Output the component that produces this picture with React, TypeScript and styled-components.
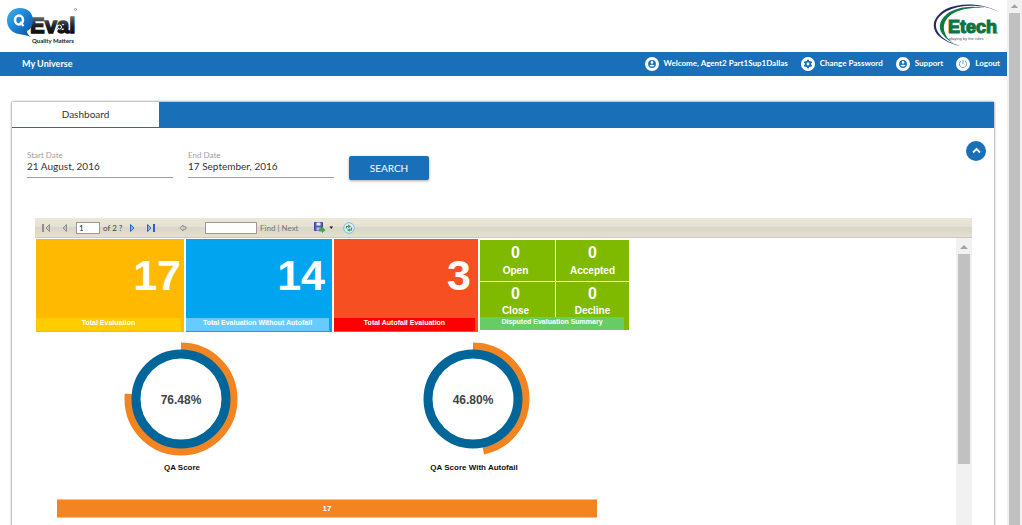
import React from "react";
import styled, { createGlobalStyle } from "styled-components";

const BLUE = "#1a6fb9";

const GlobalStyle = createGlobalStyle`
  *, *::before, *::after { box-sizing: border-box; }
  body { margin: 0; background: #fff; font-family: Lato, "Open Sans", sans-serif; color: #333; }
  button, input { font-family: inherit; margin: 0; }
`;

const Page = styled.div`
  display: flex;
  height: 100vh;
  overflow: hidden;
`;

const Main = styled.div`
  flex: 1;
  min-width: 0;
  display: flex;
  flex-direction: column;
`;

const ScrollTrack = styled.div<{ $width: number }>`
  flex: none;
  width: ${(p) => p.$width}px;
  padding: 0 2px;
  background: #f1f1f1;
`;

const ScrollArrow = styled.svg<{ $height: number }>`
  display: block;
  width: 100%;
  height: ${(p) => p.$height}px;
`;

const ScrollThumb = styled.div<{ $height: string }>`
  height: ${(p) => p.$height};
  background: #c1c1c1;
`;

const Header = styled.header`
  flex: none;
  display: flex;
  justify-content: space-between;
  height: 52px;
  padding: 0 6px;
`;

const Nav = styled.nav`
  flex: none;
  display: flex;
  justify-content: space-between;
  align-items: center;
  height: 24px;
  padding: 0 7px 0 22px;
  background: ${BLUE};
`;

const NavTitle = styled.a`
  color: #fff;
  font-size: 9px;
  line-height: 12px;
  font-weight: 700;
  text-decoration: none;
`;

const UserLinks = styled.div`
  display: flex;
  gap: 13px;
`;

const UserLink = styled.a`
  display: flex;
  gap: 5px;
  color: #fff;
  font-size: 8px;
  line-height: 12px;
  font-weight: 700;
  text-decoration: none;
  white-space: nowrap;
`;

const Panel = styled.section`
  flex: 1;
  min-height: 0;
  display: flex;
  flex-direction: column;
  margin: 26px 13px 0 12px;
  box-shadow: 0 0 2px 1px rgba(0, 0, 0, 0.3);
  border-radius: 2px 2px 0 0;
`;

const TabBar = styled.div`
  flex: none;
  display: flex;
  height: 26px;
  padding-bottom: 1px;
  background: ${BLUE};
`;

const Tab = styled.button`
  width: 147px;
  padding: 0 0 2px;
  border: 0;
  background: #fff;
  color: #333;
  font-size: 10px;
  line-height: 22px;
`;

const Filters = styled.form`
  flex: none;
  display: flex;
  align-items: flex-start;
  gap: 15px;
  height: 90px;
  padding: 22px 8px 0 15px;
`;

const Field = styled.div`
  display: flex;
  flex-direction: column;
  width: 146px;
`;

const FieldLabel = styled.label`
  font-size: 8px;
  line-height: 10px;
  color: #9e9e9e;
`;

const FieldInput = styled.input`
  width: 100%;
  height: 18px;
  padding: 0 0 6px;
  border: 0;
  border-bottom: 1px solid #9e9e9e;
  background: transparent;
  font-size: 10px;
  line-height: 11px;
  color: #333;
`;

const SearchButton = styled.button`
  width: 80px;
  height: 24px;
  margin-top: 6px;
  padding: 0;
  border: 0;
  border-radius: 2px;
  background: ${BLUE};
  color: #fff;
  font-size: 10px;
  line-height: 24px;
  box-shadow: 0 1px 3px rgba(0, 0, 0, 0.35);
`;

const CollapseButton = styled.button`
  flex: none;
  display: flex;
  width: 20px;
  height: 20px;
  margin: -9px 0 0 auto;
  padding: 0;
  border: 0;
  border-radius: 50%;
  background: ${BLUE};
`;

const Report = styled.div`
  flex: 1;
  min-height: 0;
  display: flex;
  flex-direction: column;
  margin: 0 22px 0 23px;
`;

const Toolbar = styled.div`
  flex: none;
  display: flex;
  align-items: center;
  height: 20px;
  padding: 0 6px;
  border-bottom: 1px solid #c9c8c2;
  background: linear-gradient(#ebe8da 0, #e4e1d3 45%, #d9d6c7 50%, #e3e0d2 100%);
  font-size: 8px;
  line-height: 12px;
  color: #444;
`;

const ToolButton = styled.button<{ $gap?: number }>`
  display: flex;
  flex: none;
  padding: 0;
  border: 0;
  background: transparent;
  margin-right: ${(p) => p.$gap ?? 0}px;
`;

const ToolInput = styled.input<{ $width: number }>`
  width: ${(p) => p.$width}px;
  height: 12px;
  padding: 0 2px;
  border: 1px solid #999;
  background: #fff;
  font-size: 8px;
  line-height: 10px;
  color: #222;
`;

const PageCount = styled.span`
  width: 24px;
  margin-left: 3px;
  white-space: nowrap;
`;

const FindLinks = styled.span`
  width: 54px;
  margin-left: 3px;
  color: #777;
  white-space: nowrap;
`;

const FindLink = styled.a`
  color: inherit;
  text-decoration: none;
`;

const ReportView = styled.div`
  flex: 1;
  min-height: 0;
  display: flex;
`;

const ReportBody = styled.div`
  flex: 1;
  min-width: 0;
  overflow: hidden;
  padding: 1px 0 0 1px;
  font-family: "Liberation Sans", Arial, sans-serif;
  font-weight: 700;
`;

const Tiles = styled.div`
  display: grid;
  grid-template-columns: 148px 146px 144px 149px;
  gap: 2px;
  height: 93px;
`;

const Tile = styled.article<{ $color: string }>`
  display: flex;
  flex-direction: column;
  padding: 0 3px 1px 0;
  background: ${(p) => p.$color};
  color: #fff;
`;

const TileValue = styled.div<{ $inset: number }>`
  flex: 1;
  padding: 11px ${(p) => p.$inset}px 0 0;
  text-align: right;
  font-size: 43px;
  line-height: 50px;
`;

const TileCaption = styled.div<{ $color: string }>`
  height: 13px;
  background: ${(p) => p.$color};
  color: #fff;
  font-size: 7px;
  line-height: 10px;
  text-align: center;
  white-space: nowrap;
`;

const SummaryTile = styled.article`
  display: flex;
  flex-direction: column;
  height: 90px;
  margin-top: 1px;
  padding-right: 5px;
  background: #80ba00;
`;

const SummaryGrid = styled.div`
  flex: 1;
  display: grid;
  grid-template-columns: 75px 74px;
  grid-template-rows: 42px 35px;
`;

const SummaryCell = styled.div<{ $right?: boolean; $bottom?: boolean }>`
  padding: ${(p) => (p.$bottom ? "2px" : "3px")} ${(p) => (p.$right ? "0" : "4px")} 0 0;
  border-left: ${(p) => (p.$right ? "1px solid #fff" : "0")};
  border-bottom: ${(p) => (p.$bottom ? "0" : "1px solid #fff")};
  color: #fff;
  text-align: center;
  font-size: 10px;
  line-height: ${(p) => (p.$bottom ? "15px" : "18px")};
`;

const SummaryValue = styled.div`
  font-size: 16px;
  line-height: 19px;
`;

const Gauges = styled.div`
  display: flex;
  padding-top: 10px;
`;

const Gauge = styled.figure`
  display: flex;
  flex-direction: column;
  align-items: center;
  width: 292px;
  margin: 0;
`;

const GaugeCaption = styled.figcaption`
  margin-top: 3px;
  color: #111;
  font-size: 8px;
  line-height: 12px;
`;

const Bar = styled.div`
  width: 540px;
  height: 19px;
  margin: 25px 0 0 21px;
  border: solid #f8bd8a;
  border-width: 1px 0;
  background: #f28522;
  color: #fff;
  text-align: center;
  font-size: 8px;
  line-height: 17px;
`;

function QEvalLogo() {
  return (
    <svg width="74" height="50" viewBox="6 0 74 50" role="img" aria-label="QEval Quality Matters">
      <defs>
        <linearGradient id="bubble" x1="0" y1="0" x2="1" y2="1">
          <stop offset="0" stopColor="#3cb4f0" />
          <stop offset="0.5" stopColor="#1b7fd0" />
          <stop offset="1" stopColor="#0a4c9c" />
        </linearGradient>
        <linearGradient id="ink" x1="0" y1="0" x2="0" y2="1">
          <stop offset="0" stopColor="#888" />
          <stop offset="0.5" stopColor="#222" />
          <stop offset="1" stopColor="#000" />
        </linearGradient>
      </defs>
      <text x="30" y="33" fontFamily="Liberation Sans, Arial, sans-serif" fontWeight="700" fontSize="22" fill="url(#ink)" stroke="url(#ink)" strokeWidth="1.400">Eval</text>
      <path d="M20 8c-8 0-13 5.500-13 12.500S12 33 19 34c3 .5 7 1 12 3-3-2-4-4-4-6 4-2 6-6 6-10.500C33 13 28 8 20 8z" fill="url(#bubble)" />
      <ellipse cx="19" cy="20" rx="4" ry="4.500" fill="none" stroke="#fff" strokeWidth="2.500" />
      <path d="M20 22l3.500 4" stroke="#fff" strokeWidth="2" />
      <circle cx="59.500" cy="27" r="2" fill="#222" stroke="#fff" />
      <path d="M58 29l-3 3" stroke="#fff" strokeWidth="1.300" />
      <circle cx="75.500" cy="9.500" r="1" fill="none" stroke="#777" strokeWidth="0.700" />
      <text x="32" y="43" fontFamily="Lato, sans-serif" fontWeight="700" fontSize="6" fill="#222">Quality Matters</text>
    </svg>
  );
}

function EtechLogo() {
  return (
    <svg width="70" height="50" viewBox="931 0 70 50" role="img" aria-label="Etech, playing by the rules">
      <path d="M999 12C984 3 960 2 946 9c-14 8-16 20-6 28 5 4 11 7 20 9-9-3-15-6-19-10-8-8-7-18 6-25 14-7 36-7 52 1z" fill="#262a66" />
      <path d="M985 8c-16-3-30 0-38 6-9 7-9 16-3 22 2 3 6 5 10 7-5-3-8-6-9-10-3-7 0-14 7-19 8-5 20-7 33-6z" fill="#0d7a42" />
      <text x="948" y="33" fontFamily="Liberation Sans, Arial, sans-serif" fontWeight="700" fontSize="18" fill="#0f7441" stroke="#0f7441" strokeWidth="1.200">Etech</text>
      <circle cx="997" cy="33" r="0.700" fill="#0f7441" />
      <text x="949" y="40" fontFamily="Liberation Sans, Arial, sans-serif" fontSize="4" fill="#4a4d80">playing by the rules</text>
    </svg>
  );
}

function Disc({ children }: { children: React.ReactNode }) {
  return (
    <svg width="14" height="14" viewBox="0 0 14 14" aria-hidden="true">
      <circle cx="7" cy="7" r="7" fill="#fff" />
      {children}
    </svg>
  );
}

function PersonIcon() {
  return (
    <Disc>
      <circle cx="7" cy="7" r="3.900" fill={BLUE} />
      <circle cx="7" cy="5.400" r="1.300" fill="#fff" />
      <path d="M4.400 8.400c.6-1 4.600-1 5.200 0-.8 1.500-4.400 1.500-5.200 0z" fill="#fff" />
    </Disc>
  );
}

function GearIcon() {
  return (
    <Disc>
      <g stroke={BLUE} strokeWidth="2">
        <path d="M7 2.800v8.400M3.300 4.900l7.400 4.200M3.300 9.100l7.400-4.200" />
      </g>
      <circle cx="7" cy="7" r="3.200" fill={BLUE} />
      <circle cx="7" cy="7" r="1.400" fill="#fff" />
    </Disc>
  );
}

function PowerIcon() {
  return (
    <Disc>
      <path d="M5 4a3.600 3.600 0 1 0 4 0M7 3v4" fill="none" stroke="#5f9bd0" strokeWidth="0.900" />
    </Disc>
  );
}

function PageIcon({ flip, end, active }: { flip?: boolean; end?: boolean; active?: boolean }) {
  const stroke = active ? "#2c62c9" : "#8f8f8f";
  const fill = active ? "#7fb2f5" : "#c4c4c4";
  return (
    <svg width="10" height="10" viewBox="0 0 10 10" aria-hidden="true">
      <g transform={flip ? "translate(10 0) scale(-1 1)" : undefined}>
        <path d={end ? "M1.500 1.500v7l3.500-3.500z" : "M3.500 1.500v7l3.500-3.500z"} fill={fill} stroke={stroke} />
        {end && <path d="M8 1v8" stroke={stroke} strokeWidth="2" />}
      </g>
    </svg>
  );
}

function BackIcon() {
  return (
    <svg width="8" height="10" viewBox="0 0 8 10" aria-hidden="true">
      <path d="M.8 5L4 2v1.800h3v2.400H4V8z" fill="#d5d5d5" stroke="#888" strokeWidth="0.900" />
    </svg>
  );
}

function ExportIcon() {
  return (
    <svg width="20" height="12" viewBox="0 0 20 12" aria-hidden="true">
      <path d="M.5.500h8v8h-8z" fill="#5560b5" stroke="#3b4596" />
      <path d="M2.500.500h4v3h-4z" fill="#e8eafa" />
      <path d="M2.500 5.500h4v3h-4z" fill="#b8bfea" />
      <path d="M5 6.500h3V4.800L11.500 8 8 11.200V9.500H5z" fill="#3ea64a" />
      <path d="M15.500 4.500h3.500l-1.750 2.500z" fill="#111" />
    </svg>
  );
}

function RefreshIcon() {
  return (
    <svg width="12" height="12" viewBox="0 0 12 12" aria-hidden="true">
      <circle cx="6" cy="6" r="5.300" fill="#d9ebf8" stroke="#82b4dd" strokeWidth="0.900" />
      <path d="M3.500 6.500V4.500h2M8.500 5.500v2.500h-2" fill="none" stroke="#2f9a45" strokeWidth="1.200" />
      <path d="M5.200 2.600L8 4.500 5.200 6.200zM6.800 6.200v3.600L4 8z" fill="#2f9a45" />
    </svg>
  );
}

function ScoreGauge({ value, label }: { value: number; label: string }) {
  const radius = 52.5;
  const length = 2 * Math.PI * radius;
  return (
    <Gauge>
      <svg width="116" height="117" viewBox="0 0 116 117" role="img" aria-label={`${label} ${value.toFixed(2)}%`}>
        <circle
          cx="57"
          cy="57"
          r={radius}
          fill="none"
          stroke="#f28522"
          strokeWidth="8"
          strokeDasharray={`${(length * value) / 100} ${length}`}
          transform="rotate(-90 57 57)"
        />
        <circle cx="57" cy="57" r="45" fill="none" stroke="#006699" strokeWidth="9" />
        <text x="57" y="62" textAnchor="middle" fontSize="12" fill="#444">{value.toFixed(2)}%</text>
      </svg>
      <GaugeCaption>{label}</GaugeCaption>
    </Gauge>
  );
}

const tiles = [
  { value: 17, label: "Total Evaluation", color: "#ffb900", band: "#ffcc00", inset: 0 },
  { value: 14, label: "Total Evaluation Without Autofail", color: "#00a4ef", band: "#66ccff", inset: 4 },
  { value: 3, label: "Total Autofail Evaluation", color: "#f65022", band: "#ff0000", inset: 4 },
];

const disputes = [
  { value: 0, label: "Open" },
  { value: 0, label: "Accepted" },
  { value: 0, label: "Close" },
  { value: 0, label: "Decline" },
];

export default function App() {
  return (
    <Page>
      <GlobalStyle />
      <Main>
        <Header>
          <QEvalLogo />
          <EtechLogo />
        </Header>
        <Nav>
          <NavTitle href="#">My Universe</NavTitle>
          <UserLinks>
            <UserLink href="#"><PersonIcon />Welcome, Agent2 Part1Sup1Dallas</UserLink>
            <UserLink href="#"><GearIcon />Change Password</UserLink>
            <UserLink href="#"><PersonIcon />Support</UserLink>
            <UserLink href="#"><PowerIcon />Logout</UserLink>
          </UserLinks>
        </Nav>
        <Panel>
          <TabBar role="tablist">
            <Tab type="button" role="tab" aria-selected="true">Dashboard</Tab>
          </TabBar>
          <Filters>
            <Field>
              <FieldLabel htmlFor="start">Start Date</FieldLabel>
              <FieldInput id="start" type="text" defaultValue="21 August, 2016" />
            </Field>
            <Field>
              <FieldLabel htmlFor="end">End Date</FieldLabel>
              <FieldInput id="end" type="text" defaultValue="17 September, 2016" />
            </Field>
            <SearchButton type="button">SEARCH</SearchButton>
            <CollapseButton type="button" aria-label="Collapse">
              <svg width="20" height="20" viewBox="0 0 20 20" aria-hidden="true">
                <path d="M7 11.500L10.500 8l3.500 3.500" fill="none" stroke="#fff" strokeWidth="1.800" />
              </svg>
            </CollapseButton>
          </Filters>
          <Report>
            <Toolbar>
              <ToolButton type="button" aria-label="First page" $gap={9}><PageIcon flip end /></ToolButton>
              <ToolButton type="button" aria-label="Previous page" $gap={6}><PageIcon flip /></ToolButton>
              <ToolInput type="text" aria-label="Current page" defaultValue="1" $width={24} />
              <PageCount>of 2 ?</PageCount>
              <ToolButton type="button" aria-label="Next page" $gap={9}><PageIcon active /></ToolButton>
              <ToolButton type="button" aria-label="Last page" $gap={23}><PageIcon end active /></ToolButton>
              <ToolButton type="button" aria-label="Back" $gap={18}><BackIcon /></ToolButton>
              <ToolInput type="text" aria-label="Find text" $width={52} />
              <FindLinks>
                <FindLink href="#">Find</FindLink> | <FindLink href="#">Next</FindLink>
              </FindLinks>
              <ToolButton type="button" aria-label="Export" $gap={9}><ExportIcon /></ToolButton>
              <ToolButton type="button" aria-label="Refresh"><RefreshIcon /></ToolButton>
            </Toolbar>
            <ReportView>
              <ReportBody>
                <Tiles>
                  {tiles.map((t) => (
                    <Tile key={t.label} $color={t.color}>
                      <TileValue $inset={t.inset}>{t.value}</TileValue>
                      <TileCaption $color={t.band}>{t.label}</TileCaption>
                    </Tile>
                  ))}
                  <SummaryTile>
                    <SummaryGrid>
                      {disputes.map((d, i) => (
                        <SummaryCell key={d.label} $right={i % 2 === 1} $bottom={i > 1}>
                          <SummaryValue>{d.value}</SummaryValue>
                          {d.label}
                        </SummaryCell>
                      ))}
                    </SummaryGrid>
                    <TileCaption $color="#66cc66">Disputed Evaluation Summary</TileCaption>
                  </SummaryTile>
                </Tiles>
                <Gauges>
                  <ScoreGauge value={76.48} label="QA Score" />
                  <ScoreGauge value={46.8} label="QA Score With Autofail" />
                </Gauges>
                <Bar>17</Bar>
              </ReportBody>
              <ScrollTrack $width={16}>
                <ScrollArrow $height={16} viewBox="0 0 12 16" aria-hidden="true">
                  <path d="M2 11l4-4 4 4z" fill="#a3a3a3" />
                </ScrollArrow>
                <ScrollThumb $height="210px" />
              </ScrollTrack>
            </ReportView>
          </Report>
        </Panel>
      </Main>
      <ScrollTrack $width={15}>
        <ScrollArrow $height={13} viewBox="0 0 12 13" aria-hidden="true">
          <path d="M2 8l4-4 4 4z" fill="#a3a3a3" />
        </ScrollArrow>
        <ScrollThumb $height="100%" />
      </ScrollTrack>
    </Page>
  );
}
